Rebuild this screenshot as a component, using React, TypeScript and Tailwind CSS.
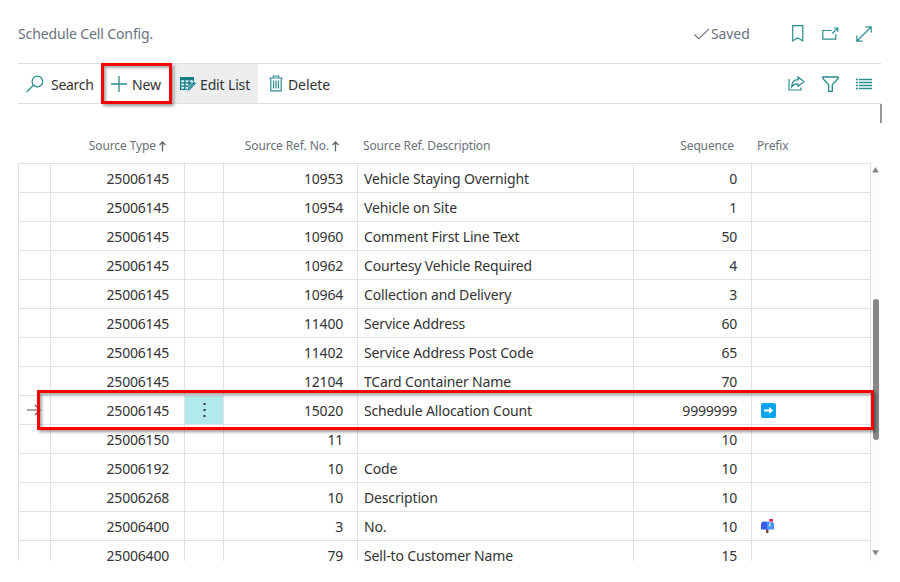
import React from "react";

type Row = { type: string; ref: string; desc: string; seq: string; prefix?: "arrow" | "mailbox"; active?: boolean };

const rows: Row[] = [
  { type: "25006145", ref: "10953", desc: "Vehicle Staying Overnight", seq: "0" },
  { type: "25006145", ref: "10954", desc: "Vehicle on Site", seq: "1" },
  { type: "25006145", ref: "10960", desc: "Comment First Line Text", seq: "50" },
  { type: "25006145", ref: "10962", desc: "Courtesy Vehicle Required", seq: "4" },
  { type: "25006145", ref: "10964", desc: "Collection and Delivery", seq: "3" },
  { type: "25006145", ref: "11400", desc: "Service Address", seq: "60" },
  { type: "25006145", ref: "11402", desc: "Service Address Post Code", seq: "65" },
  { type: "25006145", ref: "12104", desc: "TCard Container Name", seq: "70" },
  { type: "25006145", ref: "15020", desc: "Schedule Allocation Count", seq: "9999999", prefix: "arrow", active: true },
  { type: "25006150", ref: "11", desc: "", seq: "10" },
  { type: "25006192", ref: "10", desc: "Code", seq: "10" },
  { type: "25006268", ref: "10", desc: "Description", seq: "10" },
  { type: "25006400", ref: "3", desc: "No.", seq: "10", prefix: "mailbox" },
  { type: "25006400", ref: "79", desc: "Sell-to Customer Name", seq: "15" },
];

const columns = "grid grid-cols-[32px_134px_39px_134px_276px_118px_119px]";
const teal = "#2a8d91";

function SortArrow() {
  return (
    <svg width="7" height="11" viewBox="0 0 7 11" fill="none" stroke="#5f6770" strokeWidth="1.300">
      <path d="M3.500 10.500V1M.6 4 3.500 1l2.900 3" />
    </svg>
  );
}

function SearchIcon() {
  return (
    <svg className="shrink-0" width="18" height="18" viewBox="0 0 18 18" fill="none" stroke={teal} strokeWidth="1.200">
      <circle cx="11.400" cy="6.500" r="5.300" />
      <path d="M7.500 10.300.6 17" />
    </svg>
  );
}

function PlusIcon() {
  return (
    <svg className="shrink-0" width="16" height="16" viewBox="0 0 16 16" fill="none" stroke={teal} strokeWidth="1.300">
      <path d="M8 0v16M0 8h16" />
    </svg>
  );
}

function EditListIcon() {
  return (
    <svg className="shrink-0" width="17" height="16" viewBox="0 0 17 16">
      <path d="M0 1h14v5L8 14H0z" fill="#107f86" />
      <path d="M1.200 4.300h3v2h-3zM5.500 4.300h3v2h-3zM9.800 4.300h3v2h-3zM1.200 7.500h3v2h-3zM5.500 7.500h3v2h-3zM1.200 10.800h3v2h-3zM5.500 10.800h2.200v2H5.500z" fill="#e4eff1" />
      <path d="m14 5.200 2.300 2.300-6.300 6.800-3.300 1.200 1-3.600z" fill="#107f86" stroke="#ebedef" strokeWidth=".9" />
      <path d="m9.300 13 4.800-5.200" stroke="#9ed0d3" strokeWidth=".7" />
    </svg>
  );
}

function TrashIcon() {
  return (
    <svg className="shrink-0" width="14" height="17" viewBox="0 0 14 17" fill="none" stroke={teal} strokeWidth="1.200">
      <path d="M.5 3h13M4.300 3V1h5.400v2M1.800 3v12.900h10.400V3" />
      <path d="M4.600 5.500v8M7 5.500v8M9.400 5.500v8" />
    </svg>
  );
}

function Mailbox() {
  return (
    <svg className="ml-[8px]" width="15" height="16" viewBox="0 0 15 16">
      <path d="M6 10h2.400v5H6z" fill="#7a4135" />
      <path d="M5 3.500h6a3 3 0 0 1 3 3v5H4z" fill="#4894fb" />
      <path d="M1 6.500a3 3 0 0 1 6 0v5H1z" fill="#3b5bea" />
      <path d="M9.300 1.500h1.200v6H9.300z" fill="#d7dcf2" />
      <path d="M9.300 1h3.700v2.500H9.300z" fill="#ee1f57" />
      <path d="M8.700 6.800h2v1.500h-2z" fill="#c5d9fb" />
    </svg>
  );
}

function ArrowBadge() {
  return (
    <span className="mt-[1px] ml-[9px] flex h-[15px] w-[15px] items-center justify-center rounded-[2px] bg-[#08a5ef]">
      <svg width="11" height="9" viewBox="0 0 11 9" fill="#fff">
        <path d="M1 3.600h5V1l4.200 3.500L6 8V5.400H1z" />
      </svg>
    </span>
  );
}

function TableRow({ row }: { row: Row }) {
  const cell = "flex items-center border-r border-[#dfe1e4]";
  const shift = row.active ? "pt-[2px]" : "pt-[1px]";
  return (
    <div className={`${columns} h-[29px] shrink-0 border-t border-[#dfe1e4]`}>
      <div className={`${cell} justify-end pr-[9px]`}>
        {row.active && (
          <svg width="15" height="12" viewBox="0 0 15 12" fill="none" stroke="#555" strokeWidth="1.200">
            <path d="M1 6h13M8.800.8 14 6l-5.200 5.200" />
          </svg>
        )}
      </div>
      <div className={`${cell} ${shift} justify-end pr-[15px]`}>{row.type}</div>
      <div className={`${cell} justify-center ${row.active ? "bg-[#b1e9ec]" : "bg-white"}`}>
        {row.active && (
          <svg width="3" height="16" viewBox="0 0 3 16" fill="#333">
            <path d="M.5 1h2v2h-2zM.5 7h2v2h-2zM.5 13h2v2h-2z" />
          </svg>
        )}
      </div>
      <div className={`${cell} ${shift} justify-end pr-[14px]`}>{row.ref}</div>
      <div className={`${cell} ${shift} pl-[6px] tracking-[-0.15px]`}>{row.desc}</div>
      <div className={`${cell} ${shift} justify-end pr-[14px]`}>{row.seq}</div>
      <div className={cell}>
        {row.prefix === "arrow" && <ArrowBadge />}
        {row.prefix === "mailbox" && <Mailbox />}
      </div>
    </div>
  );
}

export default function App() {
  return (
    <div className="relative h-[582px] w-[900px] overflow-hidden bg-white font-['Noto_Sans',sans-serif] text-[14px] leading-5 text-[#333]">
      <header className="ml-[18px] flex h-[64px] w-[863px] items-center border-b border-[#dcdee0] pt-1 text-[#69727e]">
        <h1 className="tracking-[-0.12px]">Schedule Cell Config.</h1>
        <div className="ml-auto flex items-center pr-[9px]">
          <svg width="17" height="12" viewBox="0 0 17 12" fill="none" stroke="#626b78" strokeWidth="1.100">
            <path d="m.5 6.500 4.300 4.300L15 .8" />
          </svg>
          <span className="w-[39px] tracking-[-0.1px]">Saved</span>
          <svg className="ml-[42px]" width="12" height="17" viewBox="0 0 12 17" fill="none" stroke={teal} strokeWidth="1.200">
            <path d="M.7.700h10.100v15.200l-5-3.200-5.100 3.200z" />
          </svg>
          <svg className="ml-[18px]" width="17" height="14" viewBox="0 0 17 14" fill="none" stroke={teal} strokeWidth="1.200">
            <path d="M9.500 3.500H.8v8.700h13V7M10.300 6.500l5.300-5.300M11.800 1h4v4" />
          </svg>
          <svg className="ml-[17px]" width="16" height="16" viewBox="0 0 16 16" fill="none" stroke={teal} strokeWidth="1.200">
            <path d="M1 15 15 1M9.500.8h5.700v5.700M.8 9.500v5.700h5.700" />
          </svg>
        </div>
      </header>

      <nav className="ml-[18px] flex h-[40px] w-[863px] items-stretch border-b border-[#dcdee0]">
        <div className="flex w-[84px] items-center gap-[7px] pl-[8px]">
          <SearchIcon />
          <span className="pt-[2px] tracking-[-0.3px]">Search</span>
        </div>
        <div className="flex w-[72px] items-center gap-[5px] pl-[9px]">
          <PlusIcon />
          <span className="pt-[2px] tracking-[-0.1px]">New</span>
        </div>
        <div className="flex w-[84px] items-center gap-[3px] bg-[#ebedef] pl-[6px]">
          <EditListIcon />
          <span className="pt-[2px] tracking-[-0.15px] whitespace-nowrap">Edit List</span>
        </div>
        <div className="flex items-center gap-[5px] pl-[11px]">
          <TrashIcon />
          <span className="pt-[2px] tracking-[-0.1px]">Delete</span>
        </div>
        <div className="ml-auto flex items-center gap-[17px] pr-[9px]">
          <svg width="17" height="15" viewBox="0 0 17 15" fill="none" stroke={teal} strokeWidth="1.200">
            <path d="M1 3v11h12v-2.500M10 1l6 4.600-6 4.700V7.800C7 7.700 5 8.700 3.500 10.800 3.800 6.500 6.200 3.800 10 3.600z" />
          </svg>
          <svg width="17" height="16" viewBox="0 0 17 16" fill="none" stroke={teal} strokeWidth="1.300">
            <path d="M.8 1h15.400v1.400L10.300 8.800v6.500H6.700V8.800L.8 2.400z" />
          </svg>
          <svg width="16" height="12" viewBox="0 0 16 12" stroke={teal} strokeWidth="1.400">
            <path d="M0 1.500h2M3 1.500h13M0 4.500h2M3 4.500h13M0 7.500h2M3 7.500h13M0 10.500h2M3 10.500h13" />
          </svg>
        </div>
      </nav>

      <div className="ml-[880px] h-[19px] w-[2px] bg-[#999]" />

      <div className="ml-[18px] h-[438px] w-[863px] overflow-hidden">
        <div className={`${columns} h-[40px] items-center pt-[6px] text-[12px] text-[#68717a]`}>
          <div />
          <div className="flex items-center justify-end gap-[3px] pr-[18px] whitespace-nowrap">
            <span className="tracking-[-0.1px]">Source Type</span><SortArrow />
          </div>
          <div />
          <div className="flex items-center justify-end gap-[3px] pr-[18px] whitespace-nowrap">
            <span className="tracking-[-0.1px]">Source Ref. No.</span><SortArrow />
          </div>
          <div className="pl-[6px] tracking-[-0.15px]">Source Ref. Description</div>
          <div className="pr-[17px] text-right tracking-[-0.15px]">Sequence</div>
          <div className="pl-[6px] tracking-[-0.15px]">Prefix</div>
        </div>
        <div className="flex h-[398px]">
          <div className="flex h-[398px] w-[853px] shrink-0 flex-col overflow-hidden border-l border-[#dfe1e4] tracking-[-0.2px]">
            {rows.map((row, i) => <TableRow key={i} row={row} />)}
          </div>
          <div className="flex h-[398px] w-[9px] flex-col items-center bg-[#fcfcfc]">
            <svg className="mt-[4px] shrink-0" width="7" height="6" viewBox="0 0 7 6" fill="#858585"><path d="M3.500 0 6.800 5.500H.2z" /></svg>
            <div className="mt-[126px] h-[141px] w-[6px] shrink-0 rounded-full bg-[#878787]" />
            <svg className="mt-auto mb-[5px] shrink-0" width="7" height="6" viewBox="0 0 7 6" fill="#858585"><path d="M3.500 5.500 6.800.300H.2z" /></svg>
          </div>
        </div>
      </div>

      <div className="absolute top-[63px] left-[101px] h-[41px] w-[71px] border-[3px] border-[#fa0000] shadow-[2px_2px_3px_rgba(0,0,0,0.4),inset_2px_2px_3px_rgba(0,0,0,0.35)]" />
      <div className="absolute top-[390px] left-[37px] h-[40px] w-[837px] border-[3px] border-[#fa0000] shadow-[2px_2px_3px_rgba(0,0,0,0.4),inset_2px_2px_3px_rgba(0,0,0,0.35)]" />
    </div>
  );
}
